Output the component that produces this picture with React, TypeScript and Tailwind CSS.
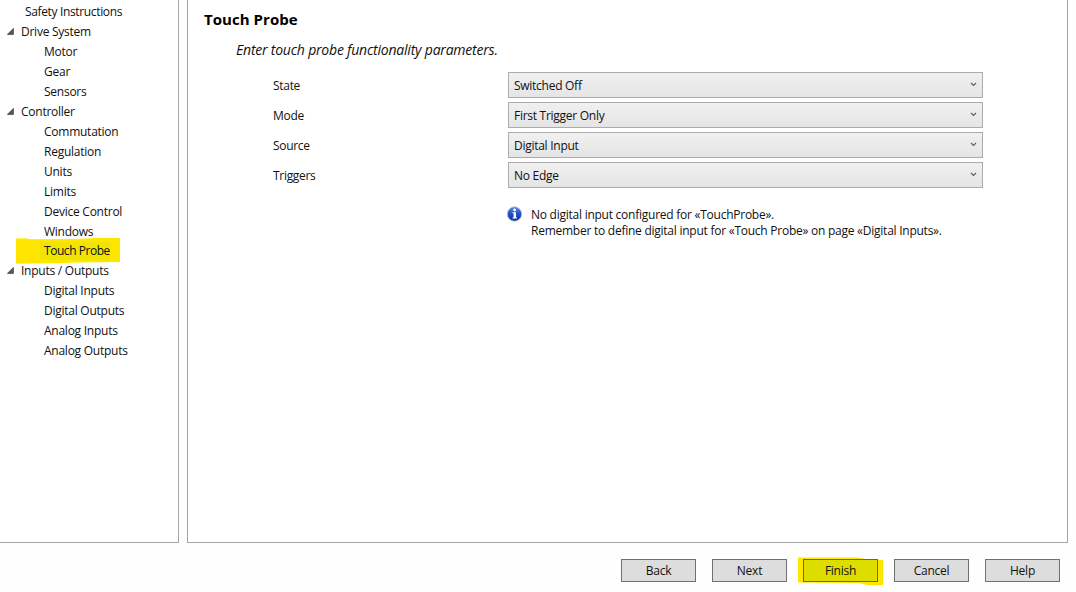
import React from "react";

type Item = { label: string; kind: "root" | "group" | "leaf"; active?: boolean };

const items: Item[] = [
  { label: "Safety Instructions", kind: "root" },
  { label: "Drive System", kind: "group" },
  { label: "Motor", kind: "leaf" },
  { label: "Gear", kind: "leaf" },
  { label: "Sensors", kind: "leaf" },
  { label: "Controller", kind: "group" },
  { label: "Commutation", kind: "leaf" },
  { label: "Regulation", kind: "leaf" },
  { label: "Units", kind: "leaf" },
  { label: "Limits", kind: "leaf" },
  { label: "Device Control", kind: "leaf" },
  { label: "Windows", kind: "leaf" },
  { label: "Touch Probe", kind: "leaf", active: true },
  { label: "Inputs / Outputs", kind: "group" },
  { label: "Digital Inputs", kind: "leaf" },
  { label: "Digital Outputs", kind: "leaf" },
  { label: "Analog Inputs", kind: "leaf" },
  { label: "Analog Outputs", kind: "leaf" },
];

const indent = { root: "pl-[25px] tracking-[-0.35px]", group: "pl-[7px]", leaf: "pl-[44px]" };

function TreeRow({ item }: { item: Item }) {
  return (
    <li
      className={`relative flex items-center whitespace-nowrap ${
        item.active ? "h-[19px] pb-px tracking-[-0.45px]" : "h-5"
      } ${indent[item.kind]}`}
    >
      {item.active && (
        <svg className="absolute left-4 top-[-4px]" width="104" height="26" viewBox="0 0 104 26">
          <path d="M0 .5L9 .2L14 1.2L60 1L80 0H104V24L60 24.5L42 25.3L0 25.8Z" fill="#ffe600" />
          <path d="M24 4H94V22H24Z" fill="#f0e500" />
        </svg>
      )}
      {item.kind === "group" && (
        <svg className="mr-[7px] mt-[-2px]" width="7" height="7" viewBox="0 0 7 7">
          <path d="M.4 6.4L6.4 .4V6.4Z" fill="#595959" stroke="#3a3a3a" strokeWidth=".7" />
        </svg>
      )}
      <span className="relative">{item.label}</span>
    </li>
  );
}

const fields = [
  ["State", "Switched Off"],
  ["Mode", "First Trigger Only"],
  ["Source", "Digital Input"],
  ["Triggers", "No Edge"],
];

function Field({ label, value }: { label: string; value: string }) {
  return (
    <div className="flex h-[26px] items-center">
      <span className="w-[235px] pt-[2px] tracking-[-0.3px]">{label}</span>
      <button className="flex h-[26px] w-[475px] items-center justify-between border border-[#acacac] bg-linear-to-b from-[#f0f0f0] to-[#e5e5e5] pl-[5px] pr-[5px]">
        <span className="pt-[2px] tracking-[-0.27px]">{value}</span>
        <svg className="mt-[-1px]" width="7" height="5" viewBox="0 0 7 5">
          <path d="M1 1L3.5 3.5L6 1" fill="none" stroke="#606060" strokeWidth="1.2" />
        </svg>
      </button>
    </div>
  );
}

function InfoIcon() {
  return (
    <svg className="shrink-0" width="16" height="16" viewBox="0 0 16 16">
      <defs>
        <linearGradient id="info" x1="0" y1="0" x2="0" y2="1">
          <stop offset="0" stopColor="#5e8be0" />
          <stop offset=".45" stopColor="#2454c8" />
          <stop offset="1" stopColor="#0b2da0" />
        </linearGradient>
      </defs>
      <circle cx="7.5" cy="8" r="7.2" fill="url(#info)" stroke="#b3bedb" strokeWidth=".8" />
      <circle cx="7.6" cy="4" r="1.4" fill="#fff" />
      <path d="M5.5 6.3H9V11.5H10V12.5H5.5V11.5H6.6V7.3H5.5Z" fill="#fff" />
    </svg>
  );
}

const buttons = ["Back", "Next", "Finish", "Cancel", "Help"];

export default function App() {
  return (
    <div className="flex h-[592px] w-[1076px] flex-col overflow-hidden bg-[#fefefe] font-['Open_Sans','Noto_Sans',sans-serif] text-[12px] leading-4 tracking-[-0.25px] text-[#111]">
      <div className="flex h-[543px] gap-2">
        <nav className="w-[179px] border-b border-r border-[#a5a5a5] bg-white pt-[2px]">
          <ul>
            {items.map((item) => (
              <TreeRow key={item.label} item={item} />
            ))}
          </ul>
        </nav>
        <main className="w-[881px] border-x border-b border-[#a5a5a5] bg-white">
          <h1 className="pl-4 pt-[9px] text-[15px] font-bold leading-5 tracking-[0.05px] text-black">Touch Probe</h1>
          <p className="pl-12 pt-[11px] text-[14px] italic leading-5 tracking-[-0.21px]">
            Enter touch probe functionality parameters.
          </p>
          <div className="flex flex-col gap-1 pl-[85px] pt-3">
            {fields.map(([label, value]) => (
              <Field key={label} label={label} value={value} />
            ))}
          </div>
          <div className="flex gap-2 pl-[319px] pt-[18px]">
            <InfoIcon />
            <p className="whitespace-nowrap pt-px">
              No digital input configured for «TouchProbe».
              <br />
              Remember to define digital input for «Touch Probe» on page «Digital Inputs».
            </p>
          </div>
        </main>
      </div>
      <footer className="flex justify-end gap-4 pr-4 pt-4">
        {buttons.map((label) => (
          <div key={label} className="relative flex">
            {label === "Finish" && (
              <svg className="absolute left-[-5px] top-[-2px]" width="86" height="29" viewBox="0 0 86 29">
                <path d="M0 .5H60L72 3H85V28H70L60 26L0 25.5Z" fill="#ffe600" />
              </svg>
            )}
            <button
              className={`relative h-[23px] w-[75px] border pt-px leading-5 ${
                label === "Finish" ? "border-[#707000] bg-[#dddd00]" : "border-[#707070] bg-[#dddddd]"
              }`}
            >
              {label}
            </button>
          </div>
        ))}
      </footer>
    </div>
  );
}
